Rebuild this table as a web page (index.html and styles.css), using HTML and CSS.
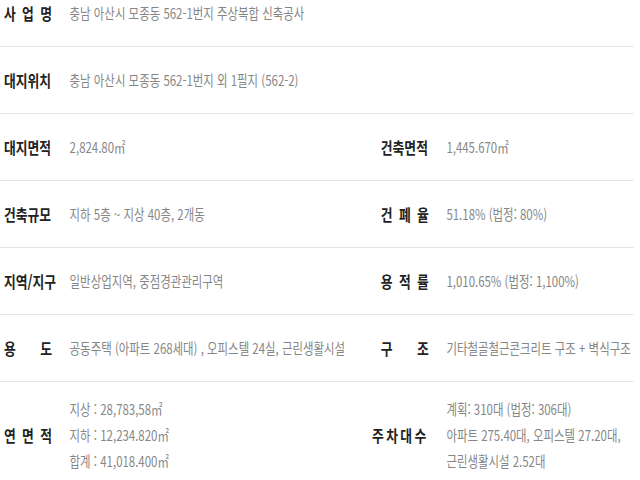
FILE: index.html
```html
<!DOCTYPE html>
<html lang="ko">
<head>
    <meta charset="UTF-8">
    <meta name="viewport" content="width=device-width, initial-scale=1.0">
    <title>사업개요</title>
    <link rel="stylesheet" href="styles.css">
</head>
<body>
    <section class="overview">
        <div class="row">
            <div class="cell">
                <span class="label">사 업 명</span>
                <span class="value">충남 아산시 모종동 562-1번지 주상복합 신축공사</span>
            </div>
        </div>
        <div class="row">
            <div class="cell">
                <span class="label">대지위치</span>
                <span class="value">충남 아산시 모종동 562-1번지 외 1필지 (562-2)</span>
            </div>
        </div>
        <div class="row split">
            <div class="cell">
                <span class="label">대지면적</span>
                <span class="value">2,824.80㎡</span>
            </div>
            <div class="cell">
                <span class="label">건축면적</span>
                <span class="value">1,445.670㎡</span>
            </div>
        </div>
        <div class="row split">
            <div class="cell">
                <span class="label">건축규모</span>
                <span class="value">지하 5층 ~ 지상 40층, 2개동</span>
            </div>
            <div class="cell">
                <span class="label">건 폐 율</span>
                <span class="value">51.18% (법정: 80%)</span>
            </div>
        </div>
        <div class="row split">
            <div class="cell">
                <span class="label">지역/지구</span>
                <span class="value">일반상업지역, 중점경관관리구역</span>
            </div>
            <div class="cell">
                <span class="label">용 적 률</span>
                <span class="value">1,010.65% (법정: 1,100%)</span>
            </div>
        </div>
        <div class="row split">
            <div class="cell">
                <span class="label">용 도</span>
                <span class="value">공동주택 (아파트 268세대) , 오피스텔 24실, 근린생활시설</span>
            </div>
            <div class="cell">
                <span class="label">구 조</span>
                <span class="value">기타철골철근콘크리트 구조 + 벽식구조</span>
            </div>
        </div>
        <div class="row split last">
            <div class="cell">
                <span class="label">연 면 적</span>
                <span class="value">지상 : 28,783,58㎡<br>지하 : 12,234.820㎡<br>합계 : 41,018.400㎡</span>
            </div>
            <div class="cell">
                <span class="label label-wide">주차대수</span>
                <span class="value">계획: 310대 (법정: 306대)<br>아파트 275.40대, 오피스텔 27.20대,<br>근린생활시설 2.52대</span>
            </div>
        </div>
    </section>
</body>
</html>
```

FILE: styles.css
```css
/* Page */
body {
    margin: 0;
    padding: 0;
    background: #ffffff;
    font-family: "Noto Sans CJK KR", "Noto Sans", sans-serif;
    overflow: hidden;
}

/* Overview table (condensed horizontally like the original) */
.overview {
    width: 792px;
    margin-top: -20px;
    transform: scaleX(0.8);
    transform-origin: 0 0;
}

.row {
    display: grid;
    grid-template-columns: 1fr;
    border-bottom: 1px solid #e4e4e4;
    padding: 20px 0;
}

.row.split {
    grid-template-columns: 471px 321px;
}

.row.last {
    padding: 14px 0 20px;
}

.cell {
    display: grid;
    grid-template-columns: 60px auto;
    column-gap: 22px;
    justify-content: start;
    align-items: center;
    padding-left: 5px;
}

.label {
    font-size: 16px;
    font-weight: bold;
    color: #222222;
    line-height: 26px;
    text-align: justify;
    text-align-last: justify;
    white-space: nowrap;
}

/* 주차대수 sits a little wider than the other labels */
.label-wide {
    width: 72px;
    margin-left: -11px;
    letter-spacing: 3px;
}

.value {
    font-size: 14.3px;
    color: #868686;
    line-height: 26px;
    white-space: nowrap;
}
```
